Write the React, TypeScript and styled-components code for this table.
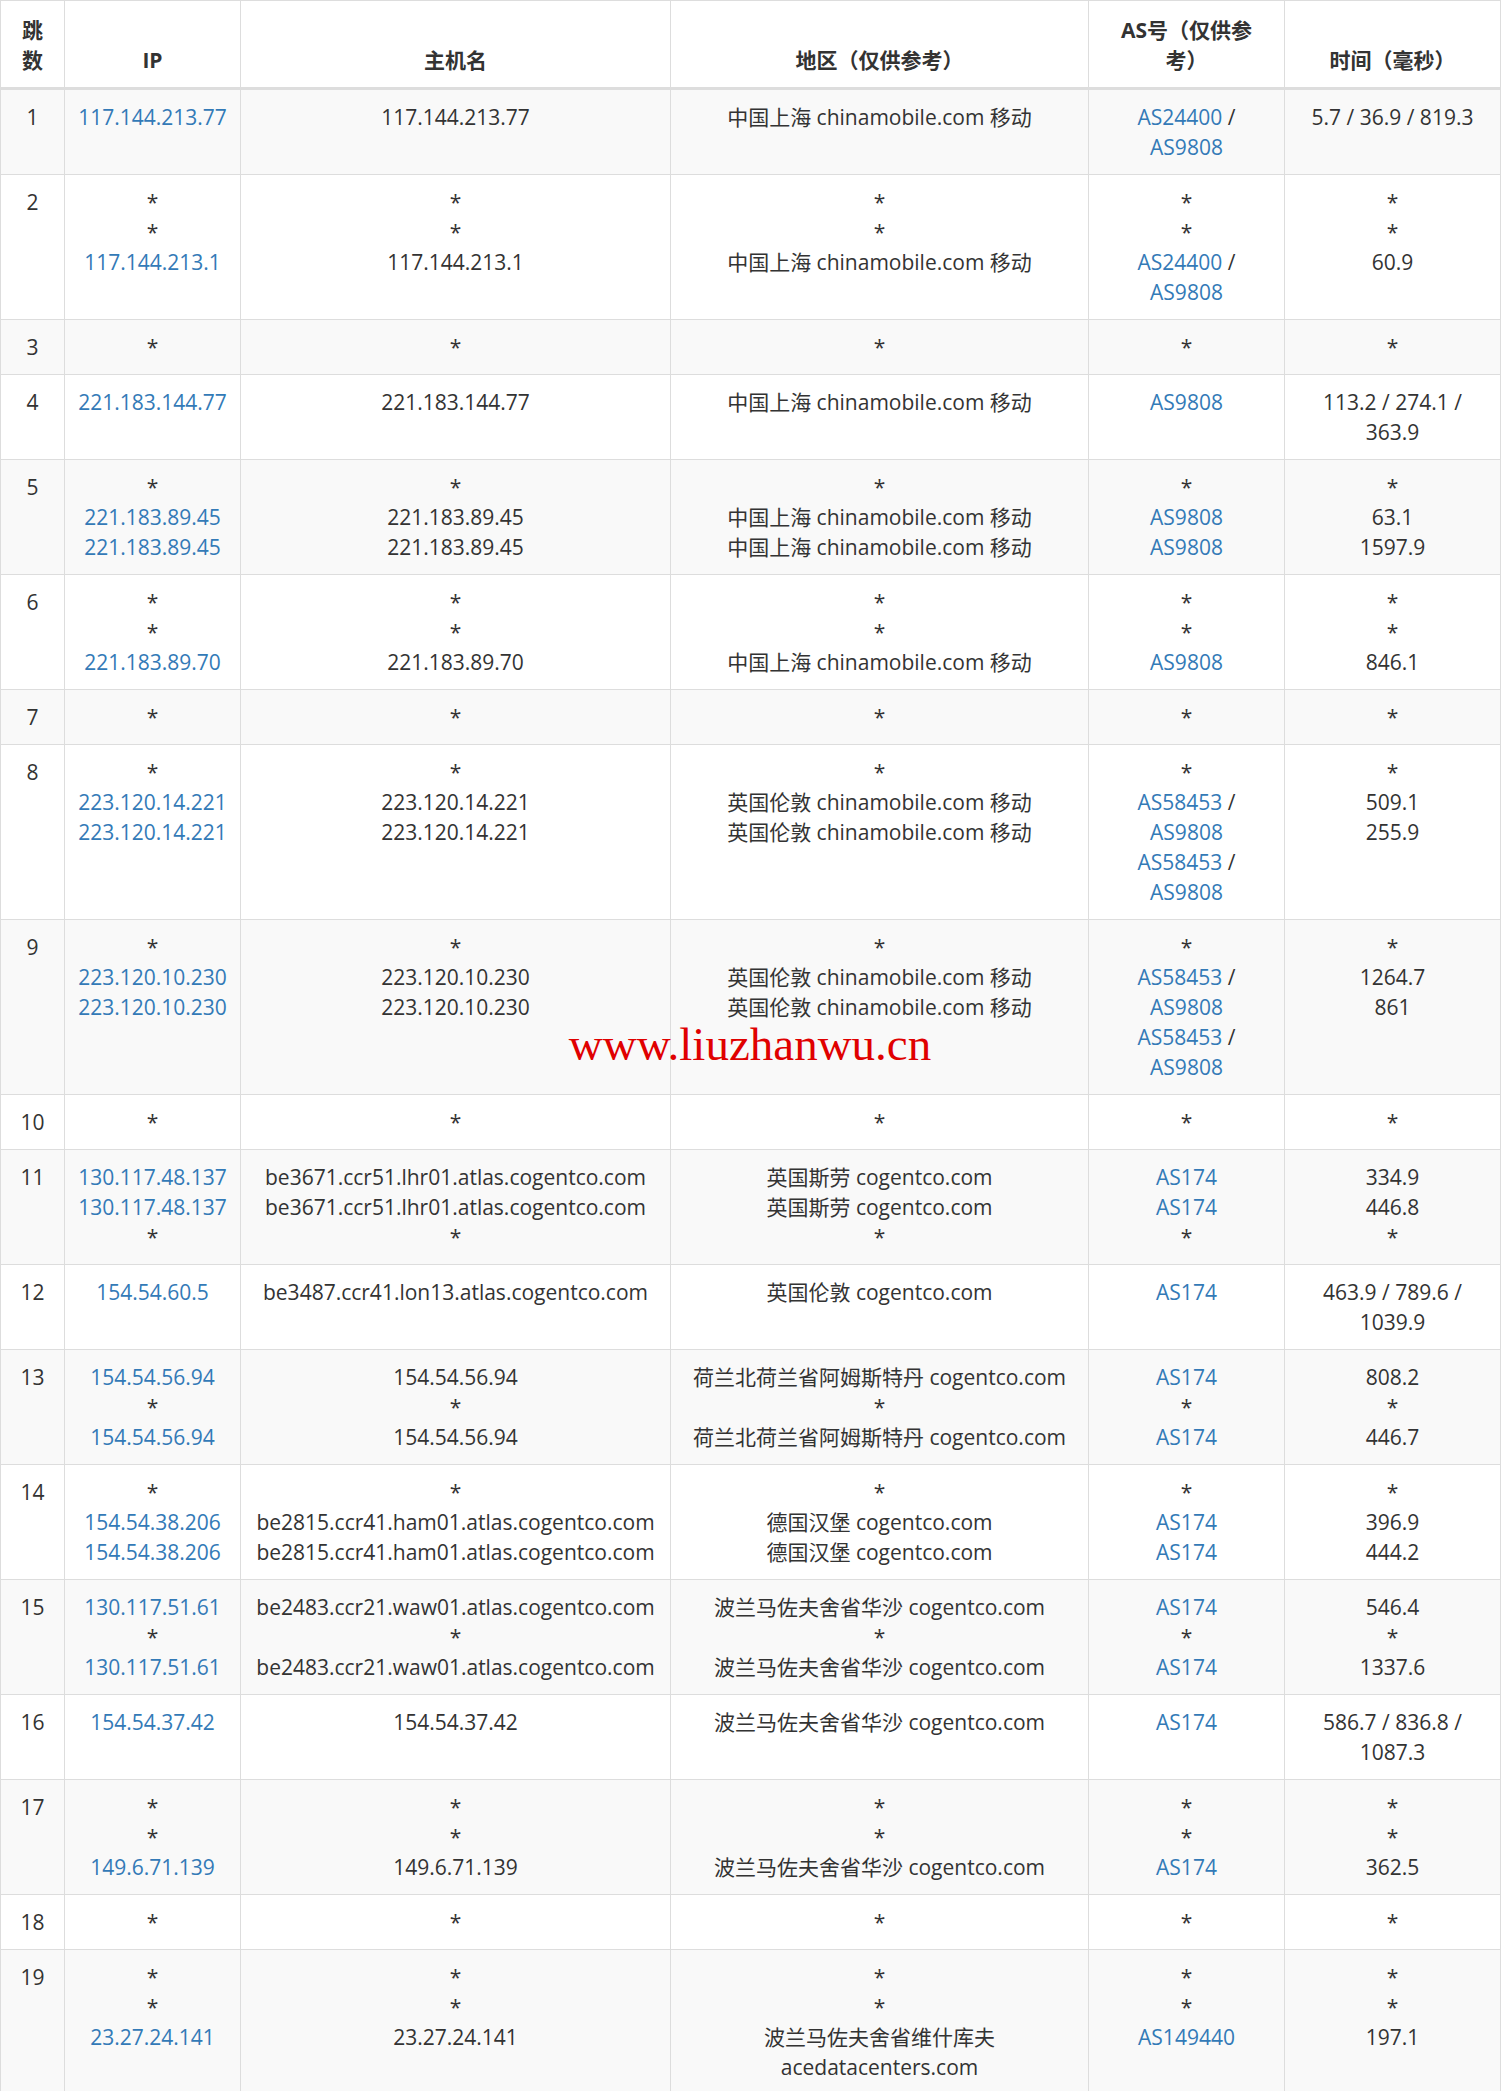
import React from "react";
import styled, { createGlobalStyle } from "styled-components";

const GlobalStyle = createGlobalStyle`
  html, body {
    margin: 0;
    padding: 0;
    background: #ffffff;
  }
  body {
    font-family: "Open Sans", "Noto Sans CJK SC", sans-serif;
    font-size: 21px;
    line-height: 30px;
    color: #333333;
  }
`;

const Page = styled.div`
  position: relative;
  width: 1500px;
`;

const Table = styled.table`
  width: 1500px;
  table-layout: fixed;
  border-collapse: collapse;
  border-spacing: 0;
  border: 1px solid #dddddd;
`;

const HeadCell = styled.th`
  padding: 13.5px 12px 12.5px;
  text-align: center;
  vertical-align: bottom;
  font-weight: 700;
  line-height: 30px;
  border: 1px solid #dddddd;
  border-bottom: 3px solid #dddddd;
  background: #ffffff;
`;

const Row = styled.tr`
  &:nth-child(odd) {
    background: #f9f9f9;
  }
  &:nth-child(even) {
    background: #ffffff;
  }
`;

const Cell = styled.td`
  padding: 12px;
  text-align: center;
  vertical-align: top;
  line-height: 30px;
  border: 1px solid #dddddd;
  white-space: normal;
`;

const Line = styled.div`
  display: block;
`;

const Link = styled.a`
  color: #337ab7;
  text-decoration: none;
`;

const Watermark = styled.div`
  position: absolute;
  left: 50%;
  top: 1021px;
  transform: translateX(-50%);
  font-family: "Liberation Serif", "Times New Roman", serif;
  font-size: 47px;
  line-height: 1;
  color: #e00000;
  white-space: nowrap;
  pointer-events: none;
`;

type Hop = {
  hop: number;
  ip: string[];
  host: string[];
  region: string[];
  as: string[];
  time: string[];
};

const S = "*";
const CMSH = "中国上海 chinamobile.com 移动";
const CMLD = "英国伦敦 chinamobile.com 移动";
const AMS = "荷兰北荷兰省阿姆斯特丹 cogentco.com";
const WAW = "波兰马佐夫舍省华沙 cogentco.com";

const hops: Hop[] = [
  { hop: 1, ip: ["117.144.213.77"], host: ["117.144.213.77"], region: [CMSH], as: ["AS24400 /", "AS9808"], time: ["5.7 / 36.9 / 819.3"] },
  { hop: 2, ip: [S, S, "117.144.213.1"], host: [S, S, "117.144.213.1"], region: [S, S, CMSH], as: [S, S, "AS24400 /", "AS9808"], time: [S, S, "60.9"] },
  { hop: 3, ip: [S], host: [S], region: [S], as: [S], time: [S] },
  { hop: 4, ip: ["221.183.144.77"], host: ["221.183.144.77"], region: [CMSH], as: ["AS9808"], time: ["113.2 / 274.1 /", "363.9"] },
  { hop: 5, ip: [S, "221.183.89.45", "221.183.89.45"], host: [S, "221.183.89.45", "221.183.89.45"], region: [S, CMSH, CMSH], as: [S, "AS9808", "AS9808"], time: [S, "63.1", "1597.9"] },
  { hop: 6, ip: [S, S, "221.183.89.70"], host: [S, S, "221.183.89.70"], region: [S, S, CMSH], as: [S, S, "AS9808"], time: [S, S, "846.1"] },
  { hop: 7, ip: [S], host: [S], region: [S], as: [S], time: [S] },
  { hop: 8, ip: [S, "223.120.14.221", "223.120.14.221"], host: [S, "223.120.14.221", "223.120.14.221"], region: [S, CMLD, CMLD], as: [S, "AS58453 /", "AS9808", "AS58453 /", "AS9808"], time: [S, "509.1", "255.9"] },
  { hop: 9, ip: [S, "223.120.10.230", "223.120.10.230"], host: [S, "223.120.10.230", "223.120.10.230"], region: [S, CMLD, CMLD], as: [S, "AS58453 /", "AS9808", "AS58453 /", "AS9808"], time: [S, "1264.7", "861"] },
  { hop: 10, ip: [S], host: [S], region: [S], as: [S], time: [S] },
  { hop: 11, ip: ["130.117.48.137", "130.117.48.137", S], host: ["be3671.ccr51.lhr01.atlas.cogentco.com", "be3671.ccr51.lhr01.atlas.cogentco.com", S], region: ["英国斯劳 cogentco.com", "英国斯劳 cogentco.com", S], as: ["AS174", "AS174", S], time: ["334.9", "446.8", S] },
  { hop: 12, ip: ["154.54.60.5"], host: ["be3487.ccr41.lon13.atlas.cogentco.com"], region: ["英国伦敦 cogentco.com"], as: ["AS174"], time: ["463.9 / 789.6 /", "1039.9"] },
  { hop: 13, ip: ["154.54.56.94", S, "154.54.56.94"], host: ["154.54.56.94", S, "154.54.56.94"], region: [AMS, S, AMS], as: ["AS174", S, "AS174"], time: ["808.2", S, "446.7"] },
  { hop: 14, ip: [S, "154.54.38.206", "154.54.38.206"], host: [S, "be2815.ccr41.ham01.atlas.cogentco.com", "be2815.ccr41.ham01.atlas.cogentco.com"], region: [S, "德国汉堡 cogentco.com", "德国汉堡 cogentco.com"], as: [S, "AS174", "AS174"], time: [S, "396.9", "444.2"] },
  { hop: 15, ip: ["130.117.51.61", S, "130.117.51.61"], host: ["be2483.ccr21.waw01.atlas.cogentco.com", S, "be2483.ccr21.waw01.atlas.cogentco.com"], region: [WAW, S, WAW], as: ["AS174", S, "AS174"], time: ["546.4", S, "1337.6"] },
  { hop: 16, ip: ["154.54.37.42"], host: ["154.54.37.42"], region: [WAW], as: ["AS174"], time: ["586.7 / 836.8 /", "1087.3"] },
  { hop: 17, ip: [S, S, "149.6.71.139"], host: [S, S, "149.6.71.139"], region: [S, S, WAW], as: [S, S, "AS174"], time: [S, S, "362.5"] },
  { hop: 18, ip: [S], host: [S], region: [S], as: [S], time: [S] },
  { hop: 19, ip: [S, S, "23.27.24.141"], host: [S, S, "23.27.24.141"], region: [S, S, "波兰马佐夫舍省维什库夫 acedatacenters.com"], as: [S, S, "AS149440"], time: [S, S, "197.1"] },
];

const columns: { key: string; lines: string[]; width: number }[] = [
  { key: "hop", lines: ["跳数"], width: 64 },
  { key: "ip", lines: ["IP"], width: 176 },
  { key: "host", lines: ["主机名"], width: 430 },
  { key: "region", lines: ["地区（仅供参考）"], width: 418 },
  { key: "as", lines: ["AS号（仅供参", "考）"], width: 196 },
  { key: "time", lines: ["时间（毫秒）"], width: 216 },
];

const PlainLines: React.FC<{ lines: string[] }> = ({ lines }) => (
  <>
    {lines.map((l, i) => (
      <Line key={i}>{l}</Line>
    ))}
  </>
);

const IpLines: React.FC<{ lines: string[] }> = ({ lines }) => (
  <>
    {lines.map((l, i) => (
      <Line key={i}>{l === S ? l : <Link href="#">{l}</Link>}</Line>
    ))}
  </>
);

const AsLines: React.FC<{ lines: string[] }> = ({ lines }) => (
  <>
    {lines.map((l, i) => {
      const m = l.match(/^(AS\d+)(.*)$/);
      return (
        <Line key={i}>
          {m ? (
            <>
              <Link href="#">{m[1]}</Link>
              {m[2]}
            </>
          ) : (
            l
          )}
        </Line>
      );
    })}
  </>
);

export default function App() {
  return (
    <Page>
      <GlobalStyle />
      <Table>
        <colgroup>
          {columns.map((c) => (
            <col key={c.key} style={{ width: c.width }} />
          ))}
        </colgroup>
        <thead>
          <tr>
            {columns.map((c) => (
              <HeadCell key={c.key}>
                <PlainLines lines={c.lines} />
              </HeadCell>
            ))}
          </tr>
        </thead>
        <tbody>
          {hops.map((h) => (
            <Row key={h.hop}>
              <Cell>{h.hop}</Cell>
              <Cell>
                <IpLines lines={h.ip} />
              </Cell>
              <Cell>
                <PlainLines lines={h.host} />
              </Cell>
              <Cell>
                <PlainLines lines={h.region} />
              </Cell>
              <Cell>
                <AsLines lines={h.as} />
              </Cell>
              <Cell>
                <PlainLines lines={h.time} />
              </Cell>
            </Row>
          ))}
        </tbody>
      </Table>
      <Watermark>www.liuzhanwu.cn</Watermark>
    </Page>
  );
}
